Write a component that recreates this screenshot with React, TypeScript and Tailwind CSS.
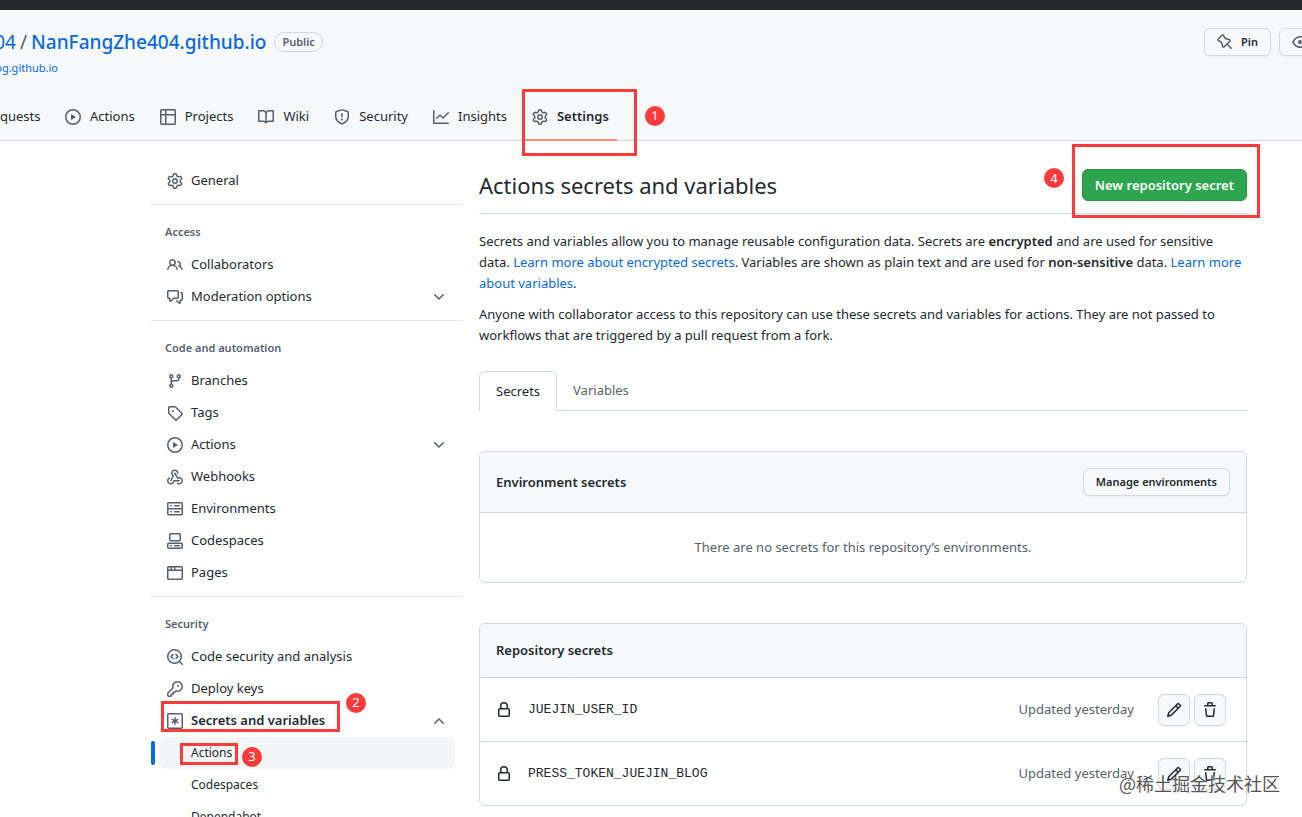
import type { ReactNode } from "react";
import clsx from "clsx";

const icons = {
  gear: "M8 0a8.2 8.2 0 0 1 .701.031C9.444.095 9.99.645 10.16 1.29l.288 1.107c.018.066.079.158.212.224.231.114.454.243.668.386.123.082.233.09.299.071l1.103-.303c.644-.176 1.392.021 1.82.63.27.385.506.792.704 1.218.315.675.111 1.422-.364 1.891l-.814.806c-.049.048-.098.147-.088.294.016.257.016.515 0 .772-.01.147.038.246.088.294l.814.806c.475.469.679 1.216.364 1.891a7.977 7.977 0 0 1-.704 1.217c-.428.61-1.176.807-1.82.63l-1.102-.302c-.067-.019-.177-.011-.3.071a5.909 5.909 0 0 1-.668.386c-.133.066-.194.158-.211.224l-.29 1.106c-.168.646-.715 1.196-1.458 1.26a8.006 8.006 0 0 1-1.402 0c-.743-.064-1.289-.614-1.458-1.26l-.289-1.106c-.018-.066-.079-.158-.212-.224a5.738 5.738 0 0 1-.668-.386c-.123-.082-.233-.09-.299-.071l-1.103.303c-.644.176-1.392-.021-1.82-.63a8.12 8.12 0 0 1-.704-1.218c-.315-.675-.111-1.422.363-1.891l.815-.806c.05-.048.098-.147.088-.294a6.214 6.214 0 0 1 0-.772c.01-.147-.038-.246-.088-.294l-.815-.806C.635 6.045.431 5.298.746 4.623a7.92 7.92 0 0 1 .704-1.217c.428-.61 1.176-.807 1.82-.63l1.102.302c.067.019.177.011.3-.071.214-.143.437-.272.668-.386.133-.066.194-.158.211-.224l.29-1.106C6.009.645 6.556.095 7.299.03 7.53.01 7.764 0 8 0Zm-.571 1.525c-.036.003-.108.036-.137.146l-.289 1.105c-.147.561-.549.967-.998 1.189-.173.086-.34.183-.5.29-.417.278-.97.423-1.529.27l-1.103-.303c-.109-.03-.175.016-.195.045-.22.312-.412.644-.573.99-.014.031-.021.11.059.19l.815.806c.411.406.562.957.53 1.456a4.709 4.709 0 0 0 0 .582c.032.499-.119 1.05-.53 1.456l-.815.806c-.081.08-.073.159-.059.19.162.346.353.677.573.989.02.03.085.076.195.046l1.102-.303c.56-.153 1.113-.008 1.53.27.161.107.328.204.501.29.447.222.85.629.997 1.189l.289 1.105c.029.109.101.143.137.146a6.6 6.6 0 0 0 1.142 0c.036-.003.108-.036.137-.146l.289-1.105c.147-.561.549-.967.998-1.189.173-.086.34-.183.5-.29.417-.278.97-.423 1.529-.27l1.103.303c.109.029.175-.016.195-.045.22-.313.411-.644.573-.99.014-.031.021-.11-.059-.19l-.815-.806c-.411-.406-.562-.957-.53-1.456a4.709 4.709 0 0 0 0-.582c-.032-.499.119-1.05.53-1.456l.815-.806c.081-.08.073-.159.059-.19a6.464 6.464 0 0 0-.573-.989c-.02-.03-.085-.076-.195-.046l-1.102.303c-.56.153-1.113.008-1.53-.27a4.44 4.44 0 0 0-.501-.29c-.447-.222-.85-.629-.997-1.189l-.289-1.105c-.029-.11-.101-.143-.137-.146a6.6 6.6 0 0 0-1.142 0ZM11 8a3 3 0 1 1-6 0 3 3 0 0 1 6 0ZM9.5 8a1.5 1.5 0 1 0-3.001.001A1.5 1.5 0 0 0 9.5 8Z",
  play: "M8 0a8 8 0 1 1 0 16A8 8 0 0 1 8 0ZM1.5 8a6.5 6.5 0 1 0 13 0 6.5 6.5 0 0 0-13 0Zm4.879-2.773 4.264 2.559a.25.25 0 0 1 0 .428l-4.264 2.559A.25.25 0 0 1 6 10.559V5.442a.25.25 0 0 1 .379-.215Z",
  table: "M0 1.75C0 .784.784 0 1.75 0h12.5C15.216 0 16 .784 16 1.75v12.5A1.75 1.75 0 0 1 14.25 16H1.75A1.75 1.75 0 0 1 0 14.25ZM6.5 6.5v8h7.75a.25.25 0 0 0 .25-.25V6.5Zm8-1.5V1.75a.25.25 0 0 0-.25-.25H6.5V5Zm-13 1.5v7.75c0 .138.112.25.25.25H5v-8ZM5 5V1.5H1.75a.25.25 0 0 0-.25.25V5Z",
  book: "M0 1.75A.75.75 0 0 1 .75 1h4.253c1.227 0 2.317.59 3 1.501A3.743 3.743 0 0 1 11.006 1h4.245a.75.75 0 0 1 .75.75v10.5a.75.75 0 0 1-.75.75h-4.507a2.25 2.25 0 0 0-1.591.659l-.622.621a.75.75 0 0 1-1.06 0l-.622-.621A2.25 2.25 0 0 0 5.258 13H.75a.75.75 0 0 1-.75-.75Zm7.251 10.324.004-5.073-.002-2.253A2.25 2.25 0 0 0 5.003 2.5H1.5v9h3.757a3.75 3.75 0 0 1 1.994.574ZM8.755 4.75l-.004 7.322a3.752 3.752 0 0 1 1.992-.572H14.5v-9h-3.495a2.25 2.25 0 0 0-2.25 2.25Z",
  shield: "M7.467.133a1.748 1.748 0 0 1 1.066 0l5.25 1.68A1.75 1.75 0 0 1 15 3.48V7c0 1.566-.32 3.182-1.303 4.682-.983 1.498-2.585 2.813-5.032 3.855a1.697 1.697 0 0 1-1.33 0c-2.447-1.042-4.049-2.357-5.032-3.855C1.32 10.182 1 8.566 1 7V3.48a1.75 1.75 0 0 1 1.217-1.667Zm.61 1.429a.25.25 0 0 0-.153 0l-5.25 1.68a.25.25 0 0 0-.174.238V7c0 1.358.275 2.666 1.057 3.86.784 1.194 2.121 2.34 4.366 3.297a.196.196 0 0 0 .154 0c2.245-.956 3.582-2.104 4.366-3.298C13.225 9.666 13.5 8.36 13.5 7V3.48a.251.251 0 0 0-.174-.237l-5.25-1.68ZM8.75 4.75v3a.75.75 0 0 1-1.5 0v-3a.75.75 0 0 1 1.5 0ZM9 10.5a1 1 0 1 1-2 0 1 1 0 0 1 2 0Z",
  graph: "M1.5 1.75V13.5h13.75a.75.75 0 0 1 0 1.5H.75a.75.75 0 0 1-.75-.75V1.75a.75.75 0 0 1 1.5 0Zm14.28 2.53-5.25 5.25a.75.75 0 0 1-1.06 0L7 7.06 4.28 9.78a.751.751 0 0 1-1.042-.018.751.751 0 0 1-.018-1.042l3.25-3.25a.75.75 0 0 1 1.06 0L10 7.94l4.72-4.72a.751.751 0 0 1 1.042.018.751.751 0 0 1 .018 1.042Z",
  people: "M2 5.5a3.5 3.5 0 1 1 5.898 2.549 5.508 5.508 0 0 1 3.034 4.084.75.75 0 1 1-1.482.235 4 4 0 0 0-7.9 0 .75.75 0 0 1-1.482-.236A5.507 5.507 0 0 1 3.102 8.05 3.493 3.493 0 0 1 2 5.5ZM11 4a3.001 3.001 0 0 1 2.22 5.018 5.01 5.01 0 0 1 2.56 3.012.749.749 0 0 1-.885.954.752.752 0 0 1-.549-.514 3.507 3.507 0 0 0-2.522-2.372.75.75 0 0 1-.574-.73v-.352a.75.75 0 0 1 .416-.672A1.5 1.5 0 0 0 11 5.5.75.75 0 0 1 11 4Zm-5.5-.5a2 2 0 1 0-.001 3.999A2 2 0 0 0 5.5 3.5Z",
  discussion: "M1.75 1h8.5c.966 0 1.75.784 1.75 1.75v5.5A1.75 1.75 0 0 1 10.25 10H7.061l-2.574 2.573A1.458 1.458 0 0 1 2 11.543V10h-.25A1.75 1.75 0 0 1 0 8.25v-5.5C0 1.784.784 1 1.75 1ZM1.5 2.75v5.5c0 .138.112.25.25.25h1a.75.75 0 0 1 .75.75v2.19l2.72-2.72a.749.749 0 0 1 .53-.22h3.5a.25.25 0 0 0 .25-.25v-5.5a.25.25 0 0 0-.25-.25h-8.5a.25.25 0 0 0-.25.25Zm13 2a.25.25 0 0 0-.25-.25h-.5a.75.75 0 0 1 0-1.5h.5c.966 0 1.75.784 1.75 1.75v5.5A1.75 1.75 0 0 1 14.25 12H14v1.543a1.458 1.458 0 0 1-2.487 1.03L9.22 12.28a.749.749 0 0 1 .326-1.275.749.749 0 0 1 .734.215l2.22 2.22v-2.19a.75.75 0 0 1 .75-.75h1a.25.25 0 0 0 .25-.25Z",
  branch: "M9.5 3.25a2.25 2.25 0 1 1 3 2.122V6A2.5 2.5 0 0 1 10 8.5H6a1 1 0 0 0-1 1v1.128a2.251 2.251 0 1 1-1.5 0V5.372a2.25 2.25 0 1 1 1.5 0v1.836A2.493 2.493 0 0 1 6 7h4a1 1 0 0 0 1-1v-.628A2.25 2.25 0 0 1 9.5 3.25Zm-6 0a.75.75 0 1 0 1.5 0 .75.75 0 0 0-1.5 0Zm8.25-.75a.75.75 0 1 0 0 1.5.75.75 0 0 0 0-1.5ZM4.25 12a.75.75 0 1 0 0 1.5.75.75 0 0 0 0-1.5Z",
  tag: "M1 7.775V2.75C1 1.784 1.784 1 2.75 1h5.025c.464 0 .91.184 1.238.513l6.25 6.25a1.75 1.75 0 0 1 0 2.474l-5.026 5.026a1.75 1.75 0 0 1-2.474 0l-6.25-6.25A1.752 1.752 0 0 1 1 7.775Zm1.5 0c0 .066.026.13.073.177l6.25 6.25a.25.25 0 0 0 .354 0l5.025-5.025a.25.25 0 0 0 0-.354l-6.25-6.25a.25.25 0 0 0-.177-.073H2.75a.25.25 0 0 0-.25.25ZM6 5a1 1 0 1 1 0 2 1 1 0 0 1 0-2Z",
  webhook: "M5.5 4.25a2.25 2.25 0 0 1 4.5 0 .75.75 0 0 0 1.5 0 3.75 3.75 0 1 0-6.14 2.889l-2.272 4.258a.75.75 0 0 0 1.324.706L7 7.25a.75.75 0 0 0-.309-1.015A2.25 2.25 0 0 1 5.5 4.25ZM7.364 3.607a.75.75 0 0 1 1.03.257l2.608 4.349a3.75 3.75 0 1 1-.628 6.785.75.75 0 0 1 .752-1.299 2.25 2.25 0 1 0-.033-3.88.75.75 0 0 1-1.03-.256L7.107 4.636a.75.75 0 0 1 .257-1.03ZM2.9 8.776A.75.75 0 0 1 2.625 9.8 2.25 2.25 0 1 0 6 11.75a.75.75 0 0 1 .75-.751h5.5a.75.75 0 0 1 0 1.5H7.425a3.751 3.751 0 1 1-5.55-3.998.75.75 0 0 1 1.024.274Z",
  server: "M1.75 1h12.5c.966 0 1.75.784 1.75 1.75v4c0 .372-.116.717-.314 1 .198.283.314.628.314 1v4a1.75 1.75 0 0 1-1.75 1.75H1.75A1.75 1.75 0 0 1 0 12.75v-4c0-.358.109-.707.314-1a1.739 1.739 0 0 1-.314-1v-4C0 1.784.784 1 1.75 1ZM1.5 2.75v4c0 .138.112.25.25.25h12.5a.25.25 0 0 0 .25-.25v-4a.25.25 0 0 0-.25-.25H1.75a.25.25 0 0 0-.25.25Zm.25 5.75a.25.25 0 0 0-.25.25v4c0 .138.112.25.25.25h12.5a.25.25 0 0 0 .25-.25v-4a.25.25 0 0 0-.25-.25ZM7 4.75A.75.75 0 0 1 7.75 4h4.5a.75.75 0 0 1 0 1.5h-4.5A.75.75 0 0 1 7 4.75ZM7.75 10h4.5a.75.75 0 0 1 0 1.5h-4.5a.75.75 0 0 1 0-1.5ZM3 4.75A.75.75 0 0 1 3.75 4h.5a.75.75 0 0 1 0 1.5h-.5A.75.75 0 0 1 3 4.75ZM3.75 10h.5a.75.75 0 0 1 0 1.5h-.5a.75.75 0 0 1 0-1.5Z",
  codespaces: "M0 11.25c0-.966.784-1.75 1.75-1.75h12.5c.966 0 1.75.784 1.75 1.75v3A1.75 1.75 0 0 1 14.25 16H1.75A1.75 1.75 0 0 1 0 14.25Zm2-9.5C2 .784 2.784 0 3.75 0h8.5C13.216 0 14 .784 14 1.75v5a1.75 1.75 0 0 1-1.75 1.75h-8.5A1.75 1.75 0 0 1 2 6.75Zm1.75-.25a.25.25 0 0 0-.25.25v5c0 .138.112.25.25.25h8.5a.25.25 0 0 0 .25-.25v-5a.25.25 0 0 0-.25-.25Zm-2 9.5a.25.25 0 0 0-.25.25v3c0 .138.112.25.25.25h12.5a.25.25 0 0 0 .25-.25v-3a.25.25 0 0 0-.25-.25ZM7 12.75a.75.75 0 0 1 .75-.75h4.5a.75.75 0 0 1 0 1.5h-4.5a.75.75 0 0 1-.75-.75Zm-4 0a.75.75 0 0 1 .75-.75h.5a.75.75 0 0 1 0 1.5h-.5a.75.75 0 0 1-.75-.75Z",
  browser: "M0 2.75C0 1.784.784 1 1.75 1h12.5c.966 0 1.75.784 1.75 1.75v10.5A1.75 1.75 0 0 1 14.25 15H1.75A1.75 1.75 0 0 1 0 13.25ZM14.5 6h-13v7.25c0 .138.112.25.25.25h12.5a.25.25 0 0 0 .25-.25Zm-6-3.5v2h6V2.75a.25.25 0 0 0-.25-.25ZM5 2.5v2h2v-2Zm-3.25 0a.25.25 0 0 0-.25.25V4.5h2v-2Z",
  codescan: "M8.47 4.97a.75.75 0 0 0 0 1.06L9.94 7.5 8.47 8.97a.75.75 0 1 0 1.06 1.06l2-2a.75.75 0 0 0 0-1.06l-2-2a.75.75 0 0 0-1.06 0ZM6.53 6.03a.75.75 0 0 0-1.06-1.06l-2 2a.75.75 0 0 0 0 1.06l2 2a.75.75 0 1 0 1.06-1.06L5.06 7.5l1.47-1.47ZM12.246 13.307a7.501 7.501 0 1 1 1.06-1.06l2.474 2.473a.749.749 0 0 1-.326 1.275.749.749 0 0 1-.734-.215ZM1.5 7.5a6.002 6.002 0 0 0 3.608 5.504 6.002 6.002 0 0 0 6.486-1.117.748.748 0 0 1 .292-.293A6 6 0 1 0 1.5 7.5Z",
  key: "M10.5 0a5.499 5.499 0 1 1-1.288 10.848l-.932.932a.749.749 0 0 1-.53.22H7v.75a.749.749 0 0 1-.22.53l-.5.5a.749.749 0 0 1-.53.22H5v.75a.749.749 0 0 1-.22.53l-.5.5a.749.749 0 0 1-.53.22h-2A1.75 1.75 0 0 1 0 14.25v-2c0-.199.079-.389.22-.53l4.932-4.932A5.5 5.5 0 0 1 10.5 0Zm-4 5.5c-.001.431.069.86.205 1.269a.75.75 0 0 1-.181.768L1.5 12.56v1.69c0 .138.112.25.25.25h1.69l.06-.06v-1.19a.75.75 0 0 1 .75-.75h1.19l.06-.06v-1.19a.75.75 0 0 1 .75-.75h1.19l1.023-1.025a.75.75 0 0 1 .768-.18A4 4 0 1 0 6.5 5.5ZM11 6a1 1 0 1 1 0-2 1 1 0 0 1 0 2Z",
  asterisk: "M1.75 0h12.5C15.216 0 16 .784 16 1.75v12.5A1.75 1.75 0 0 1 14.25 16H1.75A1.75 1.75 0 0 1 0 14.25V1.75C0 .784.784 0 1.75 0ZM1.5 1.75v12.5c0 .138.112.25.25.25h12.5a.25.25 0 0 0 .25-.25V1.75a.25.25 0 0 0-.25-.25H1.75a.25.25 0 0 0-.25.25ZM8 4a.75.75 0 0 1 .75.75V6.7l1.69-.975a.75.75 0 0 1 .75 1.3L9.5 8l1.69.976a.75.75 0 0 1-.75 1.298L8.75 9.3v1.951a.75.75 0 0 1-1.5 0V9.299l-1.69.976a.75.75 0 0 1-.75-1.3L6.5 8l-1.69-.975a.75.75 0 0 1 .75-1.3l1.69.976V4.75A.75.75 0 0 1 8 4Z",
  lock: "M4 4a4 4 0 0 1 8 0v2h.25c.966 0 1.75.784 1.75 1.75v5.5A1.75 1.75 0 0 1 12.25 15h-8.5A1.75 1.75 0 0 1 2 13.25v-5.5C2 6.784 2.784 6 3.75 6H4Zm8.25 3.5h-8.5a.25.25 0 0 0-.25.25v5.5c0 .138.112.25.25.25h8.5a.25.25 0 0 0 .25-.25v-5.5a.25.25 0 0 0-.25-.25ZM10.5 6V4a2.5 2.5 0 1 0-5 0v2Z",
  pencil: "M11.013 1.427a1.75 1.75 0 0 1 2.474 0l1.086 1.086a1.75 1.75 0 0 1 0 2.474l-8.61 8.61c-.21.21-.47.364-.756.445l-3.251.93a.75.75 0 0 1-.927-.928l.929-3.25c.081-.286.235-.547.445-.758l8.61-8.61Zm.176 4.823L9.75 4.81l-6.286 6.287a.253.253 0 0 0-.064.108l-.558 1.953 1.953-.558a.253.253 0 0 0 .108-.064Zm1.238-3.763a.25.25 0 0 0-.354 0L10.811 3.75l1.439 1.44 1.263-1.263a.25.25 0 0 0 0-.354Z",
  trash: "M11 1.75V3h2.25a.75.75 0 0 1 0 1.5H2.75a.75.75 0 0 1 0-1.5H5V1.75C5 .784 5.784 0 6.75 0h2.5C10.216 0 11 .784 11 1.75ZM4.496 6.675l.66 6.6a.25.25 0 0 0 .249.225h5.19a.25.25 0 0 0 .249-.225l.66-6.6a.75.75 0 0 1 1.492.149l-.66 6.6A1.748 1.748 0 0 1 10.595 15h-5.19a1.75 1.75 0 0 1-1.741-1.575l-.66-6.6a.75.75 0 1 1 1.492-.15ZM6.5 1.75V3h3V1.75a.25.25 0 0 0-.25-.25h-2.5a.25.25 0 0 0-.25.25Z",
  pin: "M4.456.734a1.75 1.75 0 0 1 2.826.504l.613 1.327a3.081 3.081 0 0 0 2.084 1.707l2.454.584c1.332.317 1.8 1.972.832 2.94L11.06 10l3.72 3.72a.749.749 0 0 1-.326 1.275.749.749 0 0 1-.734-.215L10 11.06l-2.204 2.205c-.968.968-2.623.5-2.94-.832l-.584-2.454a3.081 3.081 0 0 0-1.707-2.084l-1.327-.613a1.75 1.75 0 0 1-.504-2.826L4.456.734ZM5.92 1.866a.25.25 0 0 0-.404-.072L1.794 5.516a.25.25 0 0 0 .072.404l1.328.613A4.582 4.582 0 0 1 5.73 9.63l.584 2.454a.25.25 0 0 0 .42.12l5.47-5.47a.25.25 0 0 0-.12-.42L9.63 5.73a4.581 4.581 0 0 1-3.098-2.537L5.92 1.866Z",
  eye: "M8 2c1.981 0 3.671.992 4.933 2.078 1.27 1.091 2.187 2.345 2.637 3.023a1.62 1.62 0 0 1 0 1.798c-.45.678-1.367 1.932-2.637 3.023C11.67 13.008 9.981 14 8 14c-1.981 0-3.671-.992-4.933-2.078C1.797 10.83.88 9.576.43 8.898a1.62 1.62 0 0 1 0-1.798c.45-.677 1.367-1.931 2.637-3.022C4.33 2.992 6.019 2 8 2ZM1.679 7.932a.12.12 0 0 0 0 .136c.411.622 1.241 1.75 2.366 2.717C5.176 11.758 6.527 12.5 8 12.5c1.473 0 2.825-.742 3.955-1.715 1.124-.967 1.954-2.096 2.366-2.717a.12.12 0 0 0 0-.136c-.412-.621-1.242-1.75-2.366-2.717C10.824 4.242 9.473 3.5 8 3.5c-1.473 0-2.825.742-3.955 1.715-1.124.967-1.954 2.096-2.366 2.717ZM8 10a2 2 0 1 1-.001-3.999A2 2 0 0 1 8 10Z",
  chevron: "M12.78 5.22a.749.749 0 0 1 0 1.06l-4.25 4.25a.749.749 0 0 1-1.06 0L3.22 6.28a.749.749 0 1 1 1.06-1.06L8 8.939l3.72-3.719a.749.749 0 0 1 1.06 0Z",
};

type IconName = keyof typeof icons;

function Icon({ name, className = "text-[#57606a]" }: { name: IconName; className?: string }) {
  return (
    <svg className={clsx("size-4 shrink-0", className)} viewBox="0 0 16 16" fill="currentColor" aria-hidden="true">
      <path d={icons[name]} />
    </svg>
  );
}

// Red outline drawn over the control it is placed in
function Frame({ className }: { className: string }) {
  return <span className={clsx("pointer-events-none absolute border-3 border-[#fd3b3b]", className)} />;
}

// Numbered red step marker
function Step({ n, className }: { n: number; className: string }) {
  return (
    <span
      className={clsx(
        "absolute z-10 flex size-5 items-center justify-center rounded-full bg-[#fd3b3b] text-[13px] font-normal text-white",
        className
      )}
    >
      {n}
    </span>
  );
}

const tabs: { icon: IconName; label: string }[] = [
  { icon: "play", label: "Actions" },
  { icon: "table", label: "Projects" },
  { icon: "book", label: "Wiki" },
  { icon: "shield", label: "Security" },
  { icon: "graph", label: "Insights" },
];

function Header() {
  return (
    <header className="border-b border-[#d0d7de] bg-[#f6f8fa]">
      <div className="h-[10px] bg-[#24292f]" />
      <div className="flex justify-between pt-[18px]">
        <div>
          <div className="flex h-7 items-center text-[19px]">
            <span className="flex w-4 justify-end overflow-hidden">
              <a href="#" className="text-[#0969da]">04</a>
            </span>
            <span className="px-1 text-[#57606a]">/</span>
            <a href="#" className="font-medium text-[#0969da]">NanFangZhe404.github.io</a>
            <span className="ml-2 flex h-5 items-center rounded-full border border-[#d0d7de] px-[7px] text-[11px] font-semibold text-[#57606a]">
              Public
            </span>
          </div>
          <div className="mt-[3px] flex w-[58px] justify-end overflow-hidden text-[11px] leading-[18px]">
            <a href="#" className="text-[#0969da]">og.github.io</a>
          </div>
        </div>
        <div className="-mr-8 flex gap-2 text-[11px] font-semibold text-[#24292f]">
          <button className="flex h-7 items-center gap-2 rounded-md border border-[#d5d9dd] px-3 shadow-xs">
            <Icon name="pin" />
            Pin
          </button>
          <button aria-label="Watch" className="flex h-7 w-[55px] items-center rounded-md border border-[#d5d9dd] px-3 shadow-xs">
            <Icon name="eye" />
          </button>
        </div>
      </div>
      <nav className="mt-4 -mb-px flex h-12 items-center gap-[9px] text-[13px] text-[#24292f]">
        <a href="#" className="w-12">quests</a>
        {tabs.map((tab) => (
          <a key={tab.label} href="#" className="flex items-center gap-[9px] px-2">
            <Icon name={tab.icon} />
            {tab.label}
          </a>
        ))}
        <a href="#" aria-current="page" className="relative flex h-full items-center gap-[9px] border-b-2 border-[#fd8c73] px-2 pt-[2px] font-semibold">
          <Icon name="gear" />
          Settings
          <Frame className="-top-1 -left-[2px] h-[67px] w-[115px]" />
          <Step n={1} className="top-[13px] left-[121px]" />
        </a>
      </nav>
    </header>
  );
}

function NavItem({ icon, label, chevron }: { icon: IconName; label: string; chevron?: boolean }) {
  return (
    <li>
      <a href="#" className="flex h-8 items-center gap-2 px-2">
        <Icon name={icon} />
        {label}
        {chevron && <Icon name="chevron" className="ml-auto text-[#57606a]" />}
      </a>
    </li>
  );
}

function NavGroup({ title, children }: { title: string; children: ReactNode }) {
  return (
    <section className="mt-[7px] border-t border-[#e5e8eb]">
      <h2 className="flex h-11 items-end px-[14px] pb-2 text-[11px] leading-[18px] font-semibold text-[#57606a]">{title}</h2>
      <ul className="px-2">{children}</ul>
    </section>
  );
}

function Sidebar() {
  return (
    <aside className="w-[312px] shrink-0 text-[13px] text-[#24292f]">
      <ul className="px-2">
        <NavItem icon="gear" label="General" />
      </ul>
      <NavGroup title="Access">
        <NavItem icon="people" label="Collaborators" />
        <NavItem icon="discussion" label="Moderation options" chevron />
      </NavGroup>
      <NavGroup title="Code and automation">
        <NavItem icon="branch" label="Branches" />
        <NavItem icon="tag" label="Tags" />
        <NavItem icon="play" label="Actions" chevron />
        <NavItem icon="webhook" label="Webhooks" />
        <NavItem icon="server" label="Environments" />
        <NavItem icon="codespaces" label="Codespaces" />
        <NavItem icon="browser" label="Pages" />
      </NavGroup>
      <NavGroup title="Security">
        <NavItem icon="codescan" label="Code security and analysis" />
        <NavItem icon="key" label="Deploy keys" />
        <li>
          <button className="relative flex h-8 w-full items-center gap-2 px-2 font-semibold">
            <Icon name="asterisk" />
            Secrets and variables
            <Icon name="chevron" className="ml-auto rotate-180 text-[#57606a]" />
            <Frame className="-top-1 left-[2px] h-[31px] w-[179px]" />
            <Step n={2} className="-top-3 left-[187px]" />
          </button>
          <ul className="text-[12px]">
            <li className="relative">
              <span className="absolute top-1 -left-2 h-6 w-1 rounded-md bg-[#0969da]" />
              <a href="#" aria-current="page" className="flex h-8 items-center rounded-md bg-[#f4f5f7] pl-8">
                Actions
              </a>
              <Frame className="top-[6px] left-[21px] h-[22px] w-[58px]" />
              <Step n={3} className="top-[10px] left-[83px]" />
            </li>
            <li>
              <a href="#" className="flex h-8 items-center pl-8">Codespaces</a>
            </li>
            <li>
              <a href="#" className="flex h-8 items-center pl-8">Dependabot</a>
            </li>
          </ul>
        </li>
      </NavGroup>
    </aside>
  );
}

function IconButton({ icon, label }: { icon: IconName; label: string }) {
  return (
    <button
      aria-label={label}
      className="flex size-8 items-center justify-center rounded-md border border-[#d5d9dd] bg-[#f6f8fa] shadow-xs"
    >
      <Icon name={icon} className="text-[#24292f]" />
    </button>
  );
}

function SecretRow({ name }: { name: string }) {
  return (
    <li className="flex h-16 items-center border-t border-[#d0d7de] pr-5 pl-4">
      <Icon name="lock" className="text-[#24292f]" />
      <code className="ml-4 font-['Liberation_Mono',monospace] text-[13px]">{name}</code>
      <span className="mr-6 ml-auto text-[#57606a]">Updated yesterday</span>
      <div className="flex gap-1">
        <IconButton icon="pencil" label={`Edit ${name}`} />
        <IconButton icon="trash" label={`Remove ${name}`} />
      </div>
    </li>
  );
}

function Main() {
  return (
    <main className="min-w-0 flex-1 text-[13px] leading-[21px] text-[#24292f]">
      <div className="flex h-[49px] items-start justify-between border-b border-[#d0d7de]">
        <h1 className="text-[22px] leading-10">Actions secrets and variables</h1>
        <button className="relative mt-1 h-8 rounded-md border border-[#2a9147] bg-[#2da44e] px-3 font-semibold text-white">
          New repository secret
          <Frame className="-top-[26px] -right-[14px] h-[74px] w-[188px]" />
          <Step n={4} className="-top-[2px] right-[182px]" />
        </button>
      </div>

      <p className="mt-[17px]">
        Secrets and variables allow you to manage reusable configuration data. Secrets are{" "}
        <strong className="font-semibold">encrypted</strong> and are used for sensitive data.{" "}
        <a href="#" className="text-[#0969da]">Learn more about encrypted secrets</a>. Variables are shown as plain text
        and are used for <strong className="font-semibold">non-sensitive</strong> data.{" "}
        <a href="#" className="text-[#0969da]">Learn more about variables</a>.
      </p>
      <p className="mt-[10px]">
        Anyone with collaborator access to this repository can use these secrets and variables for actions. They are not
        passed to workflows that are triggered by a pull request from a fork.
      </p>

      <div className="mt-[25px] flex h-10 border-b border-[#d0d7de]">
        <a href="#" className="-mb-px flex items-center rounded-t-md border border-b-0 border-[#d0d7de] bg-white px-4">
          Secrets
        </a>
        <a href="#" className="flex items-center px-4 text-[#57606a]">Variables</a>
      </div>

      <section className="mt-10 overflow-hidden rounded-md border border-[#d0d7de]">
        <div className="flex h-[60px] items-center justify-between bg-[#f6f8fa] px-4">
          <h2 className="font-semibold">Environment secrets</h2>
          <button className="h-7 rounded-md border border-[#d5d9dd] px-3 text-[11px] leading-5 font-semibold shadow-xs">
            Manage environments
          </button>
        </div>
        <p className="border-t border-[#d0d7de] py-6 text-center text-[#57606a]">
          There are no secrets for this repository’s environments.
        </p>
      </section>

      <section className="mt-10 overflow-hidden rounded-md border border-[#d0d7de]">
        <h2 className="flex h-[53px] items-center bg-[#f6f8fa] px-4 font-semibold">Repository secrets</h2>
        <ul>
          <SecretRow name="JUEJIN_USER_ID" />
          <SecretRow name="PRESS_TOKEN_JUEJIN_BLOG" />
        </ul>
      </section>
    </main>
  );
}

export default function App() {
  return (
    <div className="relative h-screen overflow-hidden bg-white font-['Noto_Sans','Noto_Sans_CJK_SC',sans-serif]">
      <Header />
      <div className="flex gap-4 pt-6 pr-[55px] pl-[151px]">
        <Sidebar />
        <Main />
      </div>
      <div className="pointer-events-none absolute right-[22px] bottom-[22px] font-['Noto_Sans_CJK_SC',sans-serif] text-[18px] leading-6 text-[#555555] text-shadow-[1px_1px_1px_#ffffff]">
        @稀土掘金技术社区
      </div>
    </div>
  );
}
